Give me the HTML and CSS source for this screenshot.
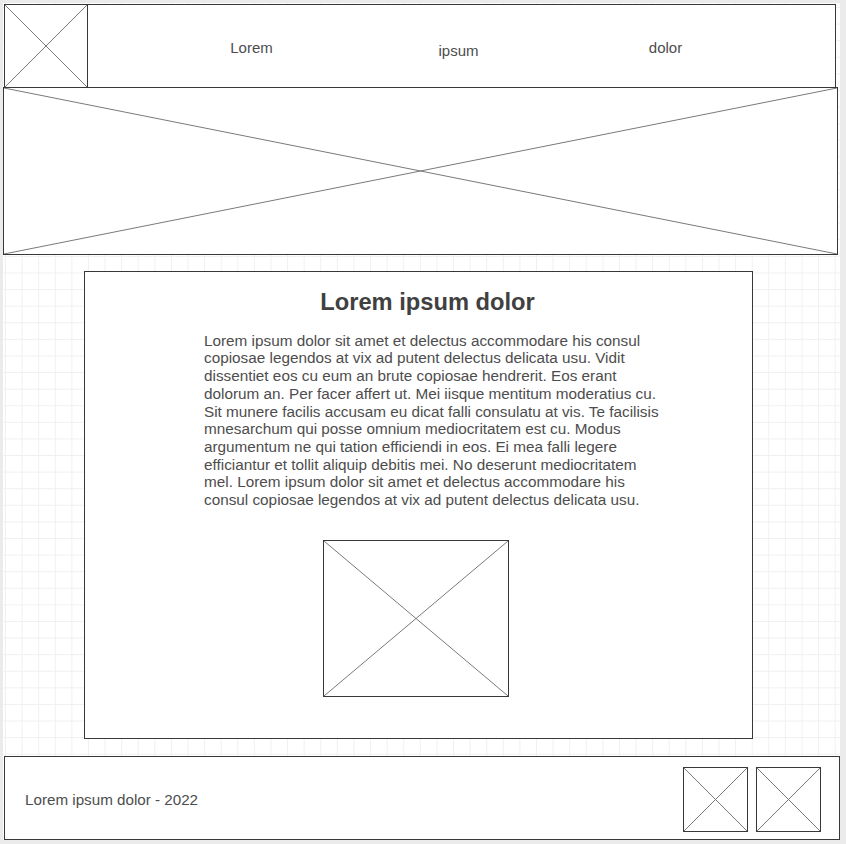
FILE: index.html
```html
<!DOCTYPE html>
<html lang="en">
<head>
  <meta charset="UTF-8">
  <meta name="viewport" content="width=device-width,initial-scale=1.0">
  <title>Wireframe</title>
  <link rel="stylesheet" href="styles.css">
</head>
<body>
  <div class="canvas">
    <header class="top">
      <div class="logo">
        <svg class="cross" viewBox="0 0 100 100" preserveAspectRatio="none"><path d="M0 0L100 100M100 0L0 100"/></svg>
      </div>
      <nav class="nav">
        <span class="nav-item">Lorem</span>
        <span class="nav-item nav-low">ipsum</span>
        <span class="nav-item">dolor</span>
      </nav>
    </header>

    <div class="hero">
      <svg class="cross" viewBox="0 0 100 100" preserveAspectRatio="none"><path d="M0 0L100 100M100 0L0 100"/></svg>
    </div>

    <main class="card">
      <h1 class="title">Lorem ipsum dolor</h1>
      <p class="text">Lorem ipsum dolor sit amet et delectus accommodare his consul copiosae legendos at vix ad putent delectus delicata usu. Vidit dissentiet eos cu eum an brute copiosae hendrerit. Eos erant dolorum an. Per facer affert ut. Mei iisque mentitum moderatius cu. Sit munere facilis accusam eu dicat falli consulatu at vis. Te facilisis mnesarchum qui posse omnium mediocritatem est cu. Modus argumentum ne qui tation efficiendi in eos. Ei mea falli legere efficiantur et tollit aliquip debitis mei. No deserunt mediocritatem mel. Lorem ipsum dolor sit amet et delectus accommodare his consul copiosae legendos at vix ad putent delectus delicata usu.</p>
      <div class="picture">
        <svg class="cross" viewBox="0 0 100 100" preserveAspectRatio="none"><path d="M0 0L100 100M100 0L0 100"/></svg>
      </div>
    </main>

    <footer class="foot">
      <span class="copy">Lorem ipsum dolor - 2022</span>
      <div class="icons">
        <div class="icon">
          <svg class="cross" viewBox="0 0 100 100" preserveAspectRatio="none"><path d="M0 0L100 100M100 0L0 100"/></svg>
        </div>
        <div class="icon">
          <svg class="cross" viewBox="0 0 100 100" preserveAspectRatio="none"><path d="M0 0L100 100M100 0L0 100"/></svg>
        </div>
      </div>
    </footer>
  </div>
</body>
</html>
```

FILE: styles.css
```css
body {
  margin: 0;
  background: #ebebeb;
  font-family: 'Liberation Sans', Arial, sans-serif;
  color: #4d4d4d;
}
.canvas {
  width: 837px;
  height: 837px;
  margin: 3px 0 0 3px;
  background-color: #fff;
  background-image:
    linear-gradient(to right, #f0f0f0 1px, transparent 1px),
    linear-gradient(to bottom, #f0f0f0 1px, transparent 1px);
  background-size: 16.6px 16.6px;
  background-position: 2px 4px;
  display: flex;
  flex-direction: column;
  align-items: flex-start;
}
.cross {
  display: block;
  width: 100%;
  height: 100%;
}
.cross path {
  stroke: #7a7a7a;
  stroke-width: 1;
  fill: none;
  vector-effect: non-scaling-stroke;
}

/* header */
.top {
  box-sizing: border-box;
  width: 832px;
  height: 84px;
  margin: 1px 0 0 1px;
  border: 1px solid #383838;
  background: #fff;
  display: flex;
}
.logo {
  width: 82px;
  height: 82px;
  border-right: 1px solid #383838;
}
.nav {
  display: flex;
  padding-left: 60px;
}
.nav-item {
  width: 207px;
  text-align: center;
  font-size: 15px;
  line-height: 17px;
  padding-top: 34px;
}
.nav-low { padding-top: 37px; }

/* hero */
.hero {
  box-sizing: border-box;
  width: 835px;
  height: 168px;
  margin-top: -1px;
  border: 1px solid #383838;
  background: #fff;
}

/* content card */
.card {
  box-sizing: border-box;
  width: 669px;
  height: 468px;
  margin: 16px 0 0 81px;
  border: 1px solid #383838;
  background: #fff;
}
.title {
  margin: 15.7px 0 0 0;
  padding-left: 18px;
  text-align: center;
  font-size: 23.7px;
  line-height: 28px;
  font-weight: bold;
  color: #404040;
}
.text {
  width: 462px;
  margin: 16px 0 0 119px;
  font-size: 15.3px;
  line-height: 17.7px;
}
.picture {
  box-sizing: border-box;
  width: 186px;
  height: 157px;
  margin: 31px 0 0 238px;
  border: 1px solid #383838;
}

/* footer */
.foot {
  box-sizing: border-box;
  width: 836px;
  height: 84px;
  margin: 17px 0 0 1px;
  border: 1px solid #383838;
  background: #fff;
  display: flex;
  justify-content: space-between;
}
.copy {
  align-self: center;
  padding: 3px 0 0 20px;
  font-size: 15.2px;
  line-height: 17px;
}
.icons {
  display: flex;
  gap: 8px;
  padding: 10px 18px 0 0;
}
.icon {
  box-sizing: border-box;
  width: 65px;
  height: 65px;
  border: 1px solid #383838;
}
```
